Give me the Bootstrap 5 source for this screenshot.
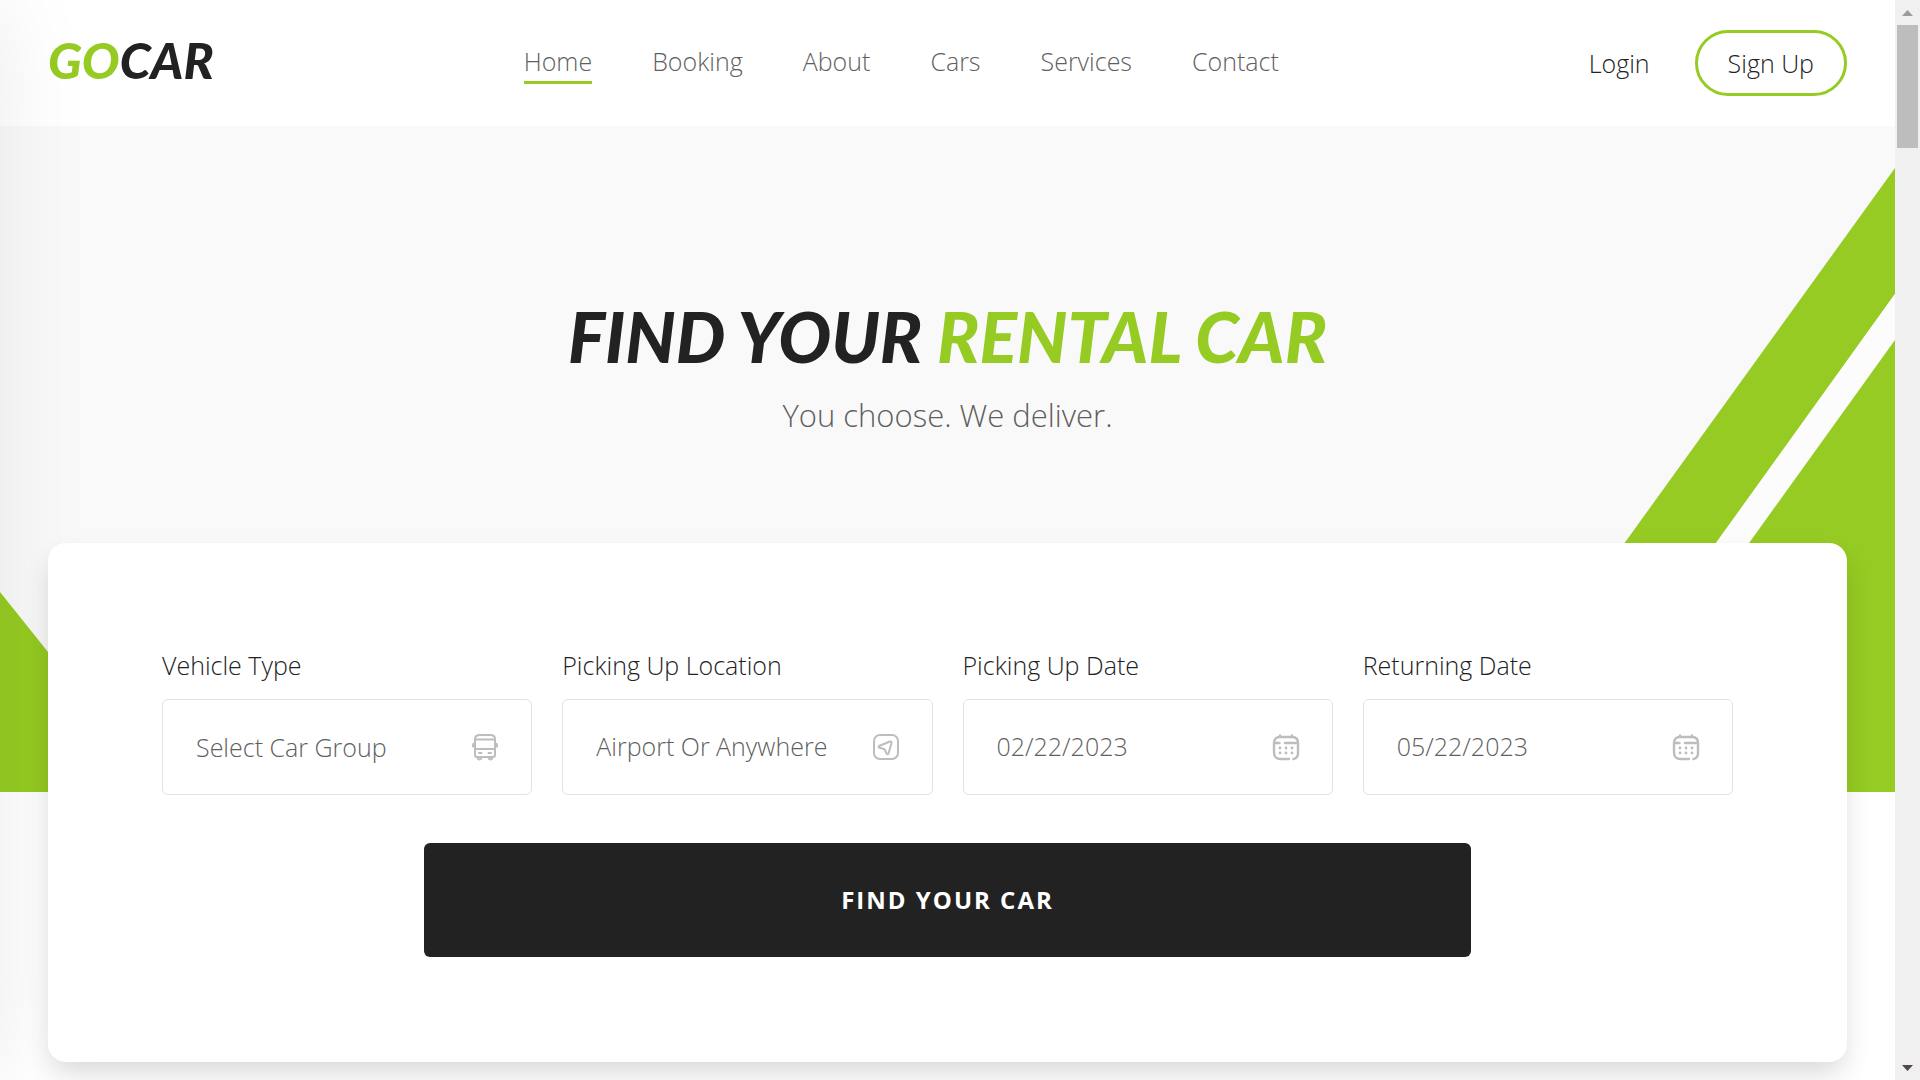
<!DOCTYPE html>
<html lang="en">
<head>
<meta charset="utf-8">
<meta name="viewport" content="width=device-width, initial-scale=1">
<title>GoCar</title>
<link href="https://cdn.jsdelivr.net/npm/bootstrap@5.3.0/dist/css/bootstrap.min.css" rel="stylesheet">
<style>
  :root { --green: #95cb22; --dark: #222222; --grey: #5f5f5f; --line: #e2e2e2; }
  body { font-family: "Open Sans", "Noto Sans", sans-serif; font-size: 25px; font-weight: 300; line-height: 36px; color: var(--grey); background: #fff; }
  a { text-decoration: none; }
  .page-main { min-width: 0; min-height: 100vh; overflow: hidden; }
  .text-green { color: var(--green); }
  .display-type { font-family: Lato, "Open Sans", sans-serif; font-style: italic; font-weight: 900; color: var(--dark); }

  .site-header { padding: 30px 48px; }
  .site-logo { font-size: 50px; line-height: 60px; padding-bottom: 6px; }
  .site-menu { gap: 60px; }
  .site-menu a { color: var(--grey); border-bottom: 3px solid transparent; line-height: 36px; padding: 1px 0 2px; }
  .site-menu a.active { border-color: var(--green); }
  .site-account { gap: 45px; }
  .site-account a { color: var(--dark); }
  .signup-btn { border: 3px solid var(--green); border-radius: 33px; padding: 12px 30px; background: #fff; color: var(--dark); font-weight: 300; }

  .hero { padding: 174px 48px 18px; }
  .hero-art { inset: 0 0 288px 0; background: #f9f9f9; }
  .hero-art svg { position: absolute; bottom: 0; fill: var(--green); }
  .art-left { left: 0; }
  .art-right { right: 0; }
  .hero-title { font-size: 70px; line-height: 72px; margin: 0 0 22px; }
  .hero-sub { font-size: 31px; line-height: 42px; margin: 0 0 107px; }

  .search-card { position: relative; z-index: 2; padding: 105px 114px; border-radius: 18px; background: #fff; box-shadow: 0 14px 28px -4px rgba(0,0,0,.16); }
  .search-row { --bs-gutter-x: 30px; --bs-gutter-y: 30px; }
  .search-row label { color: var(--dark); line-height: 34px; margin-bottom: 17px; }
  .field-box { height: 96px; padding: 0 84px 0 33px; border: 1px solid var(--line); border-radius: 6px; background: #fff; color: var(--grey); font-weight: 300; appearance: none; }
  input.field-box { padding-bottom: 2px; }
  .field-icon { right: 33px; top: 34px; width: 28px; height: 28px; fill: none; stroke: #bdbdbd; stroke-width: 2; stroke-linecap: round; stroke-linejoin: round; pointer-events: none; }
  .find-btn { margin-top: 48px; height: 114px; padding-bottom: 2px; border: 0; border-radius: 6px; background: var(--dark); color: #fff; font-size: 24px; font-weight: 700; letter-spacing: 2px; }

  .side-drawer { top: 0; left: -300px; z-index: 1; width: 300px; height: 100vh; box-shadow: 0 0 90px rgba(0,0,0,.08); pointer-events: none; }
  .scroll-track { width: 25px; height: 100vh; padding: 10px 2px 9px; background: #f0f0f0; }
  .scroll-thumb { height: 123px; margin-top: 9px; background: #bdbdbd; }
</style>
<script src="https://cdn.jsdelivr.net/npm/bootstrap@5.3.0/dist/js/bootstrap.bundle.min.js"></script>
</head>
<body>
<div class="d-flex">
  <div class="page-main flex-grow-1 position-relative">
    <header class="site-header d-flex justify-content-between align-items-center">
      <a href="#" class="site-logo display-type"><span class="text-green">GO</span>CAR</a>
      <nav class="site-menu d-flex">
        <a href="#" class="active" aria-current="page">Home</a>
        <a href="#">Booking</a>
        <a href="#">About</a>
        <a href="#">Cars</a>
        <a href="#">Services</a>
        <a href="#">Contact</a>
      </nav>
      <div class="site-account d-flex align-items-center">
        <a href="#">Login</a>
        <button type="button" class="signup-btn">Sign Up</button>
      </div>
    </header>

    <main class="hero position-relative">
      <div class="hero-art position-absolute" aria-hidden="true">
        <svg class="art-left" width="160" height="200" viewBox="0 0 160 200"><path d="M0 0L160 200H0Z"/></svg>
        <svg class="art-right" width="450" height="624" viewBox="0 0 450 624"><path d="M450 0V126L92 624H0Z"/><path fill="#fcfcfc" d="M450 126V172L125 624H92Z"/><path d="M450 172V624H125Z"/></svg>
      </div>
      <div>
        <h1 class="hero-title display-type position-relative text-center">FIND YOUR <span class="text-green">RENTAL CAR</span></h1>
        <p class="hero-sub position-relative text-center">You choose. We deliver.</p>
        <form class="search-card">
          <div class="row search-row">
            <div class="col-12 col-md-6 col-xl-3">
              <label for="vehicle" class="d-block">Vehicle Type</label>
              <div class="position-relative">
                <select id="vehicle" class="field-box w-100"><option>Select Car Group</option></select>
                <svg class="field-icon position-absolute" viewBox="0 0 28 28"><path d="M4 22V6Q4 2 9 2H19Q24 2 24 6V22Q24 24 22 24H6Q4 24 4 22ZM4 6.5H24M4 16H24M4 10.5H3Q2 10.500 2 12V13.500H4M24 10.500H25Q26 10.500 26 12V13.500H24M8 20H10.500M17.500 20H20M6.500 24V25Q7 26.500 8.500 26.500T10.500 24M17.500 24V25Q18 26.500 19.500 26.500T21.500 24"/></svg>
              </div>
            </div>
            <div class="col-12 col-md-6 col-xl-3">
              <label for="pickup" class="d-block">Picking Up Location</label>
              <div class="position-relative">
                <input id="pickup" type="text" class="field-box w-100" value="Airport Or Anywhere">
                <svg class="field-icon position-absolute" viewBox="0 0 28 28"><rect x="2" y="2" width="24" height="24" rx="6"/><path d="M7 13L18 8.500Q20 8 19.500 10L16.500 20.500Q15.500 22 14.500 20.500L13 17Q12.500 16.500 12 16L7.500 14.800Q6 14 7 13Z"/></svg>
              </div>
            </div>
            <div class="col-12 col-md-6 col-xl-3">
              <label for="date-from" class="d-block">Picking Up Date</label>
              <div class="position-relative">
                <input id="date-from" type="text" class="field-box w-100" value="02/22/2023">
                <svg class="field-icon position-absolute" viewBox="0 0 28 28"><path stroke-width="2.400" d="M17 26H9Q2 26 2 19V10Q2 4 8 4H20Q26 4 26 10V20Q26 25 21.500 26M2.500 10H7.500M13 10H25.500M8 2.500V4M20 2.500V4"/><path stroke-width="2.800" d="M8 15h.01M14 15h.01M20 15h.01M8 20h.01M14 20h.01M20 20h.01"/></svg>
              </div>
            </div>
            <div class="col-12 col-md-6 col-xl-3">
              <label for="date-to" class="d-block">Returning Date</label>
              <div class="position-relative">
                <input id="date-to" type="text" class="field-box w-100" value="05/22/2023">
                <svg class="field-icon position-absolute" viewBox="0 0 28 28"><path stroke-width="2.400" d="M17 26H9Q2 26 2 19V10Q2 4 8 4H20Q26 4 26 10V20Q26 25 21.500 26M2.500 10H7.500M13 10H25.500M8 2.500V4M20 2.500V4"/><path stroke-width="2.800" d="M8 15h.01M14 15h.01M20 15h.01M8 20h.01M14 20h.01M20 20h.01"/></svg>
              </div>
            </div>
          </div>
          <div class="row gx-0 justify-content-center">
            <button type="button" class="find-btn col-12 col-md-8">FIND YOUR CAR</button>
          </div>
        </form>
      </div>
    </main>
    <div class="side-drawer position-absolute" aria-hidden="true"></div>
  </div>
  <div class="scroll-track sticky-top d-flex flex-column flex-shrink-0" aria-hidden="true">
    <svg class="mx-auto" width="11" height="6" viewBox="0 0 11 6"><path fill="#9b9b9b" d="M5.500 0L11 6H0Z"/></svg>
    <div class="scroll-thumb"></div>
    <svg class="mx-auto mt-auto" width="11" height="6" viewBox="0 0 11 6"><path fill="#544850" d="M0 0H11L5.500 6Z"/></svg>
  </div>
</div>
</body>
</html>
